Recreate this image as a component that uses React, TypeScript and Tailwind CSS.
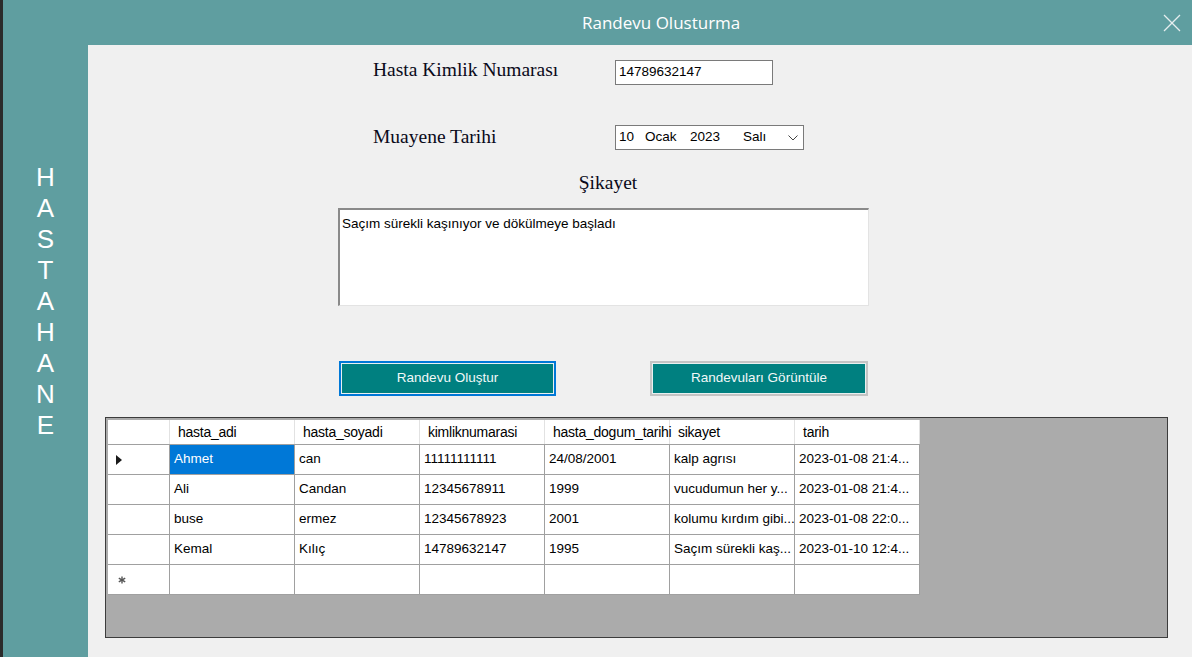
import React from 'react';

const sans = { fontFamily: '"Liberation Sans", Arial, sans-serif' };
const serif = { fontFamily: '"Liberation Serif", "Times New Roman", serif' };

const columns = ['hasta_adi', 'hasta_soyadi', 'kimliknumarasi', 'hasta_dogum_tarihi', 'sikayet', 'tarih'];

const rows = [
  ['Ahmet', 'can', '11111111111', '24/08/2001', 'kalp agrısı', '2023-01-08 21:4...'],
  ['Ali', 'Candan', '12345678911', '1999', 'vucudumun her y...', '2023-01-08 21:4...'],
  ['buse', 'ermez', '12345678923', '2001', 'kolumu kırdım gibi...', '2023-01-08 22:0...'],
  ['Kemal', 'Kılıç', '14789632147', '1995', 'Saçım sürekli kaş...', '2023-01-10 12:4...'],
];

function Sidebar() {
  return (
    <div className="w-[85px] shrink-0 pt-[117px] flex flex-col items-center text-white text-[26px] leading-[31px]" style={sans}>
      {'HASTAHANE'.split('').map((ch, i) => (
        <span key={i}>{ch}</span>
      ))}
    </div>
  );
}

function TealButton({ label, focused }: { label: string; focused?: boolean }) {
  return (
    <div
      className={
        focused
          ? 'w-[217px] h-[35px] border-2 border-[#0078d7] p-[1px] bg-[#e8f0f0]'
          : 'w-[218px] h-[35px] border-2 border-[#c4c4c4] p-[1px] bg-[#e8f0f0]'
      }
    >
      <div className="h-full bg-[#008080] flex items-center justify-center text-[13.5px] text-[#f2f8f8]" style={sans}>
        {label}
      </div>
    </div>
  );
}

function Grid() {
  return (
    <div className="ml-[17px] mt-[21px] w-[1063px] h-[221px] border border-[#3c3c3c] bg-[#ababab] pl-[2px] pt-[2px]" style={sans}>
      {/* header */}
      <div className="flex h-[25px] bg-white w-[812px] border-b border-[#a0a0a0]">
        <div className="w-[62px] border-r border-[#e2e2e2]" />
        {columns.map((c) => (
          <div key={c} className="w-[125px] border-r border-[#e2e2e2] pl-[8px] flex items-center whitespace-nowrap text-[14px] tracking-[-0.25px] text-black">
            {c}
          </div>
        ))}
      </div>
      {rows.map((r, ri) => (
        <div key={ri} className="flex h-[30px] bg-white w-[812px] border-b border-[#a0a0a0]">
          <div className="w-[62px] border-r border-[#a0a0a0] flex items-center pl-[8px]">
            {ri === 0 && (
              <svg width="6" height="10" viewBox="0 0 6 10">
                <path d="M0 0 L6 5 L0 10 Z" fill="#1a1a1a" />
              </svg>
            )}
          </div>
          {r.map((v, ci) => (
            <div
              key={ci}
              className={
                ri === 0 && ci === 0
                  ? 'w-[125px] border-r border-[#a0a0a0] bg-[#0078d7] text-white pl-[4px] flex items-center whitespace-nowrap overflow-hidden text-[13.5px]'
                  : 'w-[125px] border-r border-[#a0a0a0] text-black pl-[4px] flex items-center whitespace-nowrap overflow-hidden text-[13.5px]'
              }
            >
              {v}
            </div>
          ))}
        </div>
      ))}
      <div className="flex h-[30px] bg-white w-[812px] border-b border-[#a0a0a0]">
        <div className="w-[62px] border-r border-[#a0a0a0] flex items-center pl-[10px]">
          <svg width="8" height="8" viewBox="0 0 8 8">
            <g stroke="#555" strokeWidth="1.4">
              <line x1="4" y1="0.5" x2="4" y2="7.5" />
              <line x1="0.8" y1="2.2" x2="7.2" y2="5.8" />
              <line x1="0.8" y1="5.8" x2="7.2" y2="2.2" />
            </g>
          </svg>
        </div>
        {columns.map((c) => (
          <div key={c} className="w-[125px] border-r border-[#a0a0a0]" />
        ))}
      </div>
    </div>
  );
}

export default function App() {
  return (
    <div className="w-[1192px] h-[657px] flex bg-[#5f9ea0] overflow-hidden">
      <div className="w-[3px] shrink-0 bg-[#2b2b2b]" />
      <div className="flex-1 flex flex-col">
        <div className="h-[45px] shrink-0 flex items-center">
          <span className="ml-[579px] text-[17px] text-white" style={{ fontFamily: '"Open Sans", "Liberation Sans", sans-serif' }}>
            Randevu Olusturma
          </span>
          <svg className="ml-auto mr-[11px]" width="18" height="18" viewBox="0 0 18 18">
            <g stroke="#e6eeee" strokeWidth="1.3">
              <line x1="1" y1="1" x2="17" y2="17" />
              <line x1="17" y1="1" x2="1" y2="17" />
            </g>
          </svg>
        </div>
        <div className="flex-1 flex">
          <Sidebar />
          <div className="flex-1 bg-[#f0f0f0] flex flex-col">
            <div className="mt-[15px] ml-[285px] flex items-center h-[25px]">
              <div className="w-[242px] mb-[5px] text-[19.5px] text-[#0a0a1a]" style={serif}>
                Hasta Kimlik Numarası
              </div>
              <div className="w-[158px] h-[25px] border border-[#7a7a7a] bg-white flex items-center pl-[3px] text-[13.5px] text-black" style={sans}>
                14789632147
              </div>
            </div>
            <div className="mt-[40px] ml-[285px] flex items-center h-[25px]">
              <div className="w-[242px] mb-[2px] text-[19.5px] text-[#0a0a1a]" style={serif}>
                Muayene Tarihi
              </div>
              <div className="w-[189px] h-[25px] border border-[#7a7a7a] bg-white flex items-center pl-[3px] text-[13.5px] text-black" style={sans}>
                <span className="w-[26px]">10</span>
                <span className="w-[45px]">Ocak</span>
                <span className="w-[53px]">2023</span>
                <span>Salı</span>
                <svg className="ml-auto mr-[5px]" width="10" height="6" viewBox="0 0 10 6">
                  <polyline points="0.5,0.5 5,5 9.5,0.5" fill="none" stroke="#444" strokeWidth="1" />
                </svg>
              </div>
            </div>
            <div className="mt-[21px] ml-[250px] w-[531px] pl-[9px] text-center text-[19.5px] leading-[24px] text-[#0a0a1a]" style={serif}>
              Şikayet
            </div>
            <div
              className="mt-[13px] ml-[250px] w-[531px] h-[98px] bg-white border-t-2 border-l-2 border-r border-b border-t-[#8a8a8a] border-l-[#8a8a8a] border-r-[#e3e3e3] border-b-[#e3e3e3] pl-[2px] pt-[4px] text-[13.5px] text-black"
              style={sans}
            >
              Saçım sürekli kaşınıyor ve dökülmeye başladı
            </div>
            <div className="mt-[55px] ml-[251px] flex gap-[94px]">
              <TealButton label="Randevu Oluştur" focused />
              <TealButton label="Randevuları Görüntüle" />
            </div>
            <Grid />
          </div>
        </div>
      </div>
    </div>
  );
}
